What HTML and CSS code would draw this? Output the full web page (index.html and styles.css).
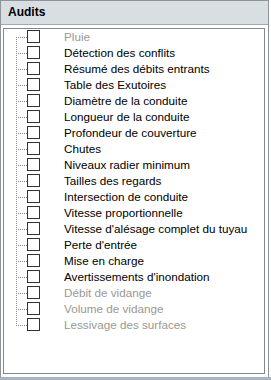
FILE: index.html
```html
<!DOCTYPE html>
<html lang="fr">
<head>
<meta charset="utf-8">
<title>Audits</title>
<link rel="stylesheet" href="styles.css">
</head>
<body>
<div class="panel">
  <div class="header">Audits</div>
  <div class="body">
    <div class="listbox">
      <ul class="tree">
        <li class="row first disabled"><span class="conn"><span class="v"></span><span class="h"></span></span><span class="cb"></span><span class="label">Pluie</span></li>
        <li class="row"><span class="conn"><span class="v"></span><span class="h"></span></span><span class="cb"></span><span class="label">Détection des conflits</span></li>
        <li class="row"><span class="conn"><span class="v"></span><span class="h"></span></span><span class="cb"></span><span class="label">Résumé des débits entrants</span></li>
        <li class="row"><span class="conn"><span class="v"></span><span class="h"></span></span><span class="cb"></span><span class="label">Table des Exutoires</span></li>
        <li class="row"><span class="conn"><span class="v"></span><span class="h"></span></span><span class="cb"></span><span class="label">Diamètre de la conduite</span></li>
        <li class="row"><span class="conn"><span class="v"></span><span class="h"></span></span><span class="cb"></span><span class="label">Longueur de la conduite</span></li>
        <li class="row"><span class="conn"><span class="v"></span><span class="h"></span></span><span class="cb"></span><span class="label">Profondeur de couverture</span></li>
        <li class="row"><span class="conn"><span class="v"></span><span class="h"></span></span><span class="cb"></span><span class="label">Chutes</span></li>
        <li class="row"><span class="conn"><span class="v"></span><span class="h"></span></span><span class="cb"></span><span class="label">Niveaux radier minimum</span></li>
        <li class="row"><span class="conn"><span class="v"></span><span class="h"></span></span><span class="cb"></span><span class="label">Tailles des regards</span></li>
        <li class="row"><span class="conn"><span class="v"></span><span class="h"></span></span><span class="cb"></span><span class="label">Intersection de conduite</span></li>
        <li class="row"><span class="conn"><span class="v"></span><span class="h"></span></span><span class="cb"></span><span class="label">Vitesse proportionnelle</span></li>
        <li class="row"><span class="conn"><span class="v"></span><span class="h"></span></span><span class="cb"></span><span class="label">Vitesse d'alésage complet du tuyau</span></li>
        <li class="row"><span class="conn"><span class="v"></span><span class="h"></span></span><span class="cb"></span><span class="label">Perte d'entrée</span></li>
        <li class="row"><span class="conn"><span class="v"></span><span class="h"></span></span><span class="cb"></span><span class="label">Mise en charge</span></li>
        <li class="row"><span class="conn"><span class="v"></span><span class="h"></span></span><span class="cb"></span><span class="label">Avertissements d'inondation</span></li>
        <li class="row disabled"><span class="conn"><span class="v"></span><span class="h"></span></span><span class="cb"></span><span class="label">Débit de vidange</span></li>
        <li class="row disabled"><span class="conn"><span class="v"></span><span class="h"></span></span><span class="cb"></span><span class="label">Volume de vidange</span></li>
        <li class="row last disabled"><span class="conn"><span class="v"></span><span class="h"></span></span><span class="cb"></span><span class="label">Lessivage des surfaces</span></li>
      </ul>
    </div>
  </div>
</div>
<div class="band"></div>
</body>
</html>
```

FILE: styles.css
```css
html, body {
  margin: 0;
  padding: 0;
  background: #ffffff;
}
body {
  width: 271px;
  height: 380px;
  overflow: hidden;
  font-family: "Liberation Sans", Arial, sans-serif;
  font-size: 11.7px;
  color: #000;
}
.panel {
  box-sizing: border-box;
  width: 269px;
  height: 377px;
  border: 1px solid #8e949a;
  border-bottom: none;
  display: flex;
  flex-direction: column;
}
.header {
  box-sizing: border-box;
  height: 24px;
  background: #d9dee3;
  border-bottom: 1px solid #a3a8ad;
  font-weight: bold;
  font-size: 12px;
  line-height: 23px;
  padding-left: 7px;
  color: #000;
}
.body {
  flex: 1;
  display: flex;
  padding: 3px 3px 3px 2px;
  background: #fff;
}
.listbox {
  flex: 1;
  box-sizing: border-box;
  border: 1px solid #828790;
  background: #fff;
}
.tree {
  list-style: none;
  margin: 0;
  padding: 0 0 0 12px;
}
.row {
  display: flex;
  align-items: flex-start;
  height: 16px;
}
.conn {
  display: flex;
  width: 11px;
  height: 16px;
}
.v {
  width: 1px;
  height: 16px;
  background: repeating-linear-gradient(to bottom, #8c8c8c 0 1px, transparent 1px 2px);
}
.first .v {
  margin-top: 8px;
  height: 8px;
}
.last .v {
  height: 9px;
}
.h {
  width: 10px;
  height: 1px;
  margin-top: 8px;
  background: repeating-linear-gradient(to right, transparent 0 1px, #8c8c8c 1px 2px);
}
.cb {
  box-sizing: border-box;
  width: 13px;
  height: 13px;
  margin-top: 1px;
  border: 1px solid #333333;
  background: #fff;
  flex: none;
}
.label {
  margin-left: 24px;
  line-height: 16px;
  white-space: nowrap;
}
.disabled .label {
  color: #9b9892;
}
.band {
  height: 3px;
  background: #a8b4bf;
}
```
